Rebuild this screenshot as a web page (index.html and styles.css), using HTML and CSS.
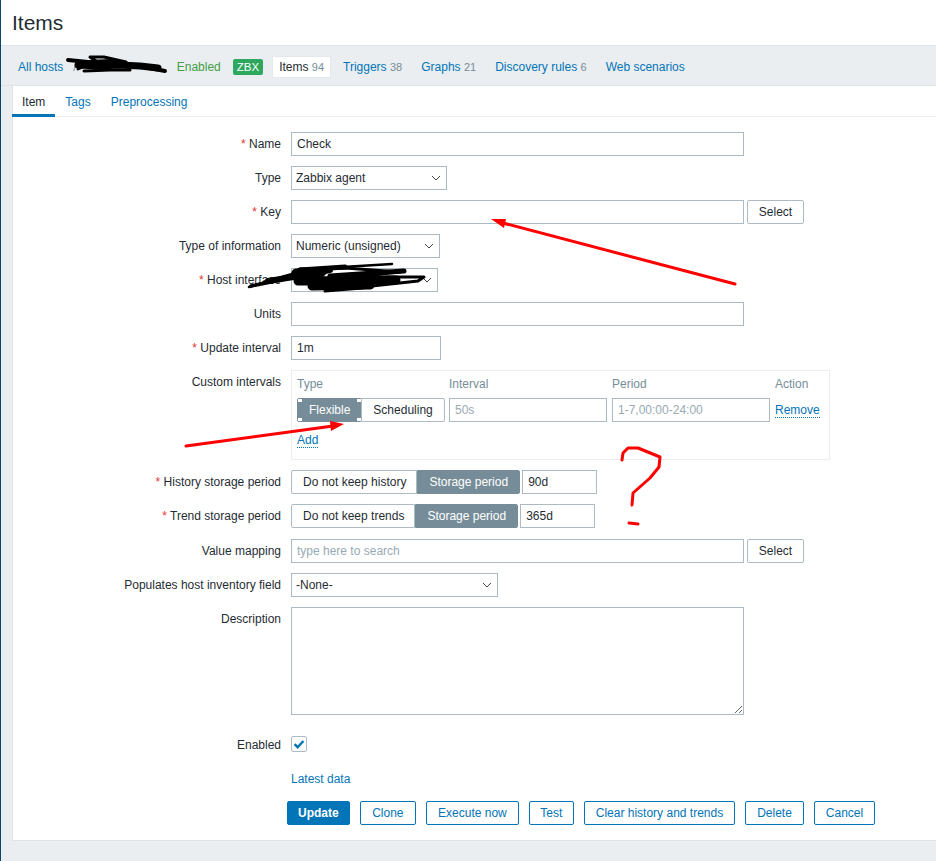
FILE: index.html
```html
<!DOCTYPE html>
<html lang="en">
<head>
<meta charset="utf-8">
<title>Items</title>
<link rel="stylesheet" href="styles.css">
</head>
<body>
<div class="page">
  <header class="title-bar"><h1>Items</h1></header>
  <nav class="host-nav">
    <a class="nav-item">All hosts</a>
    <span class="nav-sep">/</span>
    <span class="nav-host"></span>
    <span class="status">Enabled</span>
    <span class="badge">ZBX</span>
    <a class="nav-item nav-current">Items <small>94</small></a>
    <a class="nav-item">Triggers <small>38</small></a>
    <a class="nav-item">Graphs <small>21</small></a>
    <a class="nav-item">Discovery rules <small>6</small></a>
    <a class="nav-item">Web scenarios</a>
  </nav>
  <main class="panel">
    <div class="tabs">
      <a class="tab tab-active">Item</a>
      <a class="tab">Tags</a>
      <a class="tab">Preprocessing</a>
    </div>
    <form class="form">
      <div class="row">
        <label class="lbl"><i>*</i> Name</label>
        <div class="field"><input class="input w-full" value="Check"></div>
      </div>
      <div class="row">
        <label class="lbl">Type</label>
        <div class="field"><select class="input sel w-type"><option>Zabbix agent</option></select></div>
      </div>
      <div class="row">
        <label class="lbl"><i>*</i> Key</label>
        <div class="field inline">
          <input class="input w-full">
          <button type="button" class="btn btn-select">Select</button>
        </div>
      </div>
      <div class="row">
        <label class="lbl">Type of information</label>
        <div class="field"><select class="input sel w-info"><option>Numeric (unsigned)</option></select></div>
      </div>
      <div class="row">
        <label class="lbl"><i>*</i> Host interface</label>
        <div class="field"><select class="input sel w-host"><option></option></select></div>
      </div>
      <div class="row">
        <label class="lbl">Units</label>
        <div class="field"><input class="input w-full"></div>
      </div>
      <div class="row">
        <label class="lbl"><i>*</i> Update interval</label>
        <div class="field"><input class="input w-interval" value="1m"></div>
      </div>
      <div class="row">
        <label class="lbl">Custom intervals</label>
        <div class="field">
          <div class="intervals">
            <span class="th">Type</span>
            <span class="th">Interval</span>
            <span class="th">Period</span>
            <span class="th">Action</span>
            <div class="seg">
              <span class="seg-btn seg-on seg-sel">Flexible
                <b class="hd hd-tl"></b><b class="hd hd-tr"></b><b class="hd hd-bl"></b><b class="hd hd-br"></b>
              </span>
              <span class="seg-btn">Scheduling</span>
            </div>
            <input class="input w-cell" placeholder="50s">
            <input class="input w-cell" placeholder="1-7,00:00-24:00">
            <a class="dotted remove">Remove</a>
            <a class="dotted add">Add</a>
          </div>
        </div>
      </div>
      <div class="row">
        <label class="lbl"><i>*</i> History storage period</label>
        <div class="field inline-tight">
          <div class="seg">
            <span class="seg-btn">Do not keep history</span>
            <span class="seg-btn seg-on">Storage period</span>
          </div>
          <input class="input w-store" value="90d">
        </div>
      </div>
      <div class="row">
        <label class="lbl"><i>*</i> Trend storage period</label>
        <div class="field inline-tight">
          <div class="seg">
            <span class="seg-btn">Do not keep trends</span>
            <span class="seg-btn seg-on">Storage period</span>
          </div>
          <input class="input w-store" value="365d">
        </div>
      </div>
      <div class="row row-multi">
        <label class="lbl">Value mapping</label>
        <div class="field inline">
          <input class="input w-full" placeholder="type here to search">
          <button type="button" class="btn btn-select">Select</button>
        </div>
      </div>
      <div class="row">
        <label class="lbl">Populates host inventory field</label>
        <div class="field"><select class="input sel w-inv"><option>-None-</option></select></div>
      </div>
      <div class="row">
        <label class="lbl">Description</label>
        <div class="field"><textarea class="input area"></textarea></div>
      </div>
      <div class="row row-check">
        <label class="lbl">Enabled</label>
        <div class="field">
          <span class="check">
            <svg width="14" height="14" viewBox="0 0 14 14"><path d="M2.6 7.2 5.6 10.2 11.4 4" fill="none" stroke="#0275b8" stroke-width="2.4"/></svg>
          </span>
        </div>
      </div>
      <div class="row row-latest">
        <span></span>
        <div class="field"><a class="link">Latest data</a></div>
      </div>
      <div class="actions">
        <button type="button" class="btn btn-primary">Update</button>
        <button type="button" class="btn btn-wider">Clone</button>
        <button type="button" class="btn">Execute now</button>
        <button type="button" class="btn btn-narrower">Test</button>
        <button type="button" class="btn">Clear history and trends</button>
        <button type="button" class="btn">Delete</button>
        <button type="button" class="btn">Cancel</button>
      </div>
    </form>
  </main>
</div>
<svg class="marks" width="936" height="861" viewBox="0 0 936 861">
  <g fill="none" stroke="#000" stroke-linecap="round" stroke-linejoin="round">
    <path stroke-width="4" d="M68 60 L88 62 L112 61 L165 71"/>
    <path stroke-width="7" d="M78 65 L100 66 L118 65 L140 66 L158 68"/>
    <path stroke-width="3" d="M78 69 L96 61 L90 57 L104 57 L126 62"/>
    <path stroke-width="3" d="M84 71 L110 70 L130 70"/>
    <path stroke-width="2.5" d="M249 287 L285 276 L310 269 L392 264"/>
    <path stroke-width="3.5" d="M251 286 L276 281 L300 276"/>
    <path stroke-width="9" d="M296 273 L322 272 M298 281 L396 280 M312 286 L370 285"/>
    <path stroke-width="5" d="M300 270 L345 267 M330 276 L404 271"/>
    <path stroke-width="3" d="M292 274 L300 269 L345 268 L400 272 L345 277 L424 277 L418 281 L372 286 L325 291 L362 288"/>
    <path stroke-width="6" d="M268 281 L300 276 L330 270"/>
  </g>
  <g fill="none" stroke="#ff0000" stroke-linecap="round" stroke-linejoin="round">
    <path stroke-width="3" d="M735 284 L503 223"/>
    <path stroke-width="3" d="M186 446 L333 426"/>
    <path stroke-width="3" d="M622 460 L623 453 L628 448 L638 448 L660 457 L659 467 L650 478 L633 493 L632 505"/>
    <path stroke-width="3" d="M629 523 L638 524"/>
  </g>
  <path fill="#ff0000" d="M491 219 L506 219 L504 228 Z M344 424 L330 421 L331 431 Z"/>
</svg>
</body>
</html>
```
FILE: styles.css
```css
* { box-sizing: border-box; }
html, body { margin: 0; height: 861px; overflow: hidden; }
body {
  position: relative;
  background: #ebeef0;
  color: #1f2c33;
  font: 12px/14px "Liberation Sans", Arial, sans-serif;
}
a { color: #0275b8; text-decoration: none; }
.page { height: 861px; border-left: 1px solid #0a466a; }
.title-bar {
  height: 46px;
  background: #fff;
  border-bottom: 1px solid #dfe4e7;
  padding: 11px 0 0 11px;
}
h1 { margin: 0; font-size: 21px; line-height: 24px; font-weight: 400; }
.host-nav {
  height: 40px;
  display: flex;
  align-items: center;
  gap: 7px;
  padding: 3px 0 0 11px;
  border-bottom: 1px solid #dfe4e7;
}
.nav-item { padding: 3px 6px; line-height: 14px; }
.nav-item small { font-size: 11px; color: #768d99; }
.nav-current { color: #1f2c33; background: #fff; box-shadow: 0 0 0 1px #e6e9eb; }
.nav-sep { color: #768d99; margin-left: -3px; }
.nav-host { width: 84px; }
.status { color: #429e47; margin-left: 2px; }
.badge {
  margin: 0 3px 0 5px;
  padding: 0 4px;
  height: 16px;
  line-height: 16px;
  border-radius: 2px;
  background: #2fa85f;
  color: #fff;
  font-size: 11.5px;
}
.panel {
  margin-left: 11px;
  height: 755px;
  background: #fff;
  border-left: 1px solid #dfe4e7;
  border-bottom: 1px solid #dfe4e7;
}
.tabs {
  height: 31px;
  display: flex;
  margin-left: -1px;
  border-bottom: 1px solid #ebeef0;
}
.tab { height: 31px; padding: 9px 10px 0; }
.tab-active { color: #1f2c33; border-bottom: 3px solid #0275b8; }
.form {
  display: flex;
  flex-direction: column;
  gap: 10px;
  padding-top: 15px;
}
.row {
  display: grid;
  grid-template-columns: 268px 1fr;
  column-gap: 10px;
}
.lbl { text-align: right; padding-top: 5px; }
.lbl i { color: #e33734; font-style: normal; }
.field { min-width: 0; }
.inline { display: flex; gap: 3px; }
.inline-tight { display: flex; gap: 2px; }
.input {
  display: block;
  height: 24px;
  margin: 0;
  padding: 0 5px;
  border: 1px solid #acbbc2;
  border-radius: 0;
  background: #fff;
  color: #1f2c33;
  font: 12px/14px "Liberation Sans", Arial, sans-serif;
  outline: 0;
}
.input::placeholder { color: #97aab3; opacity: 1; }
.sel {
  appearance: none;
  -webkit-appearance: none;
  padding: 0 4px;
  background: #fff url("data:image/svg+xml,%3Csvg xmlns='http://www.w3.org/2000/svg' width='10' height='6'%3E%3Cpath d='M1 1l4 4 4-4' fill='none' stroke='%23444' stroke-width='1'/%3E%3C/svg%3E") no-repeat right 5px center;
}
.w-full { width: 453px; }
.w-type { width: 156px; }
.w-info { width: 149px; }
.w-host { width: 147px; }
.w-interval { width: 150px; }
.w-store { width: 75px; }
.w-inv { width: 207px; }
.w-cell { width: 158px; }
.area { width: 453px; height: 108px; padding: 5px; }
.intervals {
  width: 539px;
  height: 90px;
  padding: 6px 5px 0;
  border: 1px solid #ebeef0;
  display: grid;
  grid-template-columns: 147px 158px 158px auto;
  grid-template-rows: 15px 24px auto;
  column-gap: 5px;
  row-gap: 6px;
}
.th { color: #768d99; }
.seg { display: flex; height: 24px; }
.seg-btn {
  position: relative;
  display: block;
  padding: 4px 11px 0;
  height: 24px;
  border: 1px solid #acbbc2;
  background: #fff;
  white-space: nowrap;
}
.seg-btn:first-child { border-radius: 2px 0 0 2px; padding-right: 10px; }
.seg-btn:last-child { border-radius: 0 2px 2px 0; }
.seg-on { background: #768d99; border-color: #768d99; color: #fff; }
.hd { position: absolute; width: 4px; height: 3px; background: #fff; }
.hd-tl { top: 0; left: 0; }
.hd-tr { top: 0; right: -1px; }
.hd-bl { bottom: 0; left: 0; }
.hd-br { bottom: 0; right: -1px; }
.dotted { border-bottom: 1px dotted #0275b8; justify-self: start; line-height: 14px; }
.remove { align-self: center; }
.add { grid-column: 1; grid-row: 3; align-self: start; margin-top: 5px; }
.row-multi { padding-top: 1px; }
.row-check { padding-top: 11px; }
.row-check .lbl { padding-top: 2px; }
.check {
  display: block;
  width: 16px;
  height: 16px;
  border: 1px solid #acbbc2;
  border-radius: 2px;
}
.check svg { display: block; }
.row-latest { padding-top: 10px; }
.btn {
  height: 24px;
  padding: 0 11px;
  border: 1px solid #0275b8;
  border-radius: 2px;
  background: #fff;
  color: #0275b8;
  font: 12px/14px "Liberation Sans", Arial, sans-serif;
  white-space: nowrap;
}
.btn-primary { background: #0275b8; color: #fff; font-weight: 700; padding: 0 10px; }
.btn-select { border-color: #acbbc2; color: #1f2c33; width: 57px; padding: 0; }
.btn-wider { padding: 0 11.5px; }
.btn-narrower { padding: 0 10.5px; }
.actions {
  display: flex;
  gap: 10px;
  margin-top: 5px;
  padding-left: 274px;
}
.marks { position: absolute; left: 0; top: 0; pointer-events: none; }
```
